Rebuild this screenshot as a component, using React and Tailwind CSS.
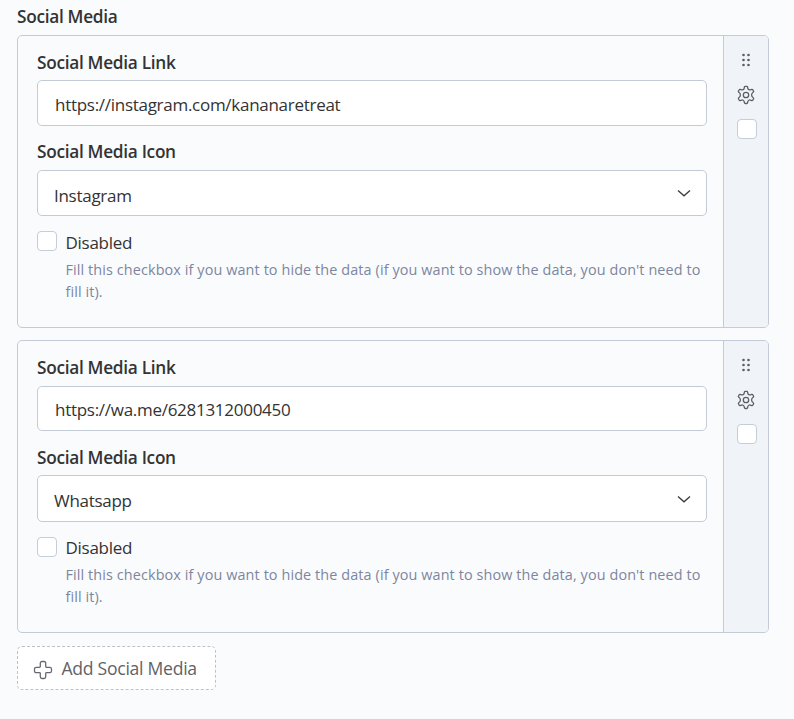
import React from "react";

const items = [
  {
    link: "https://instagram.com/kananaretreat",
    icon: "Instagram",
    inputSpacing: "mt-[5px] h-[46px] pt-[3px]",
    labelSpacing: "mt-[14px] mb-[6px]",
    selectHeight: "h-[46px]",
    selectPad: "pt-[5px]",
    disabledPad: "h-6",
  },
  {
    link: "https://wa.me/6281312000450",
    icon: "Whatsapp",
    inputSpacing: "mt-[6px] h-[45px] pt-[2px]",
    labelSpacing: "mt-[15px] mb-[5px]",
    selectHeight: "h-[47px]",
    selectPad: "pt-[4px]",
    disabledPad: "h-6 -mt-px",
  },
];

function DragIcon() {
  return (
    <svg className="block h-[14px] w-[10px]" viewBox="0 0 10 14" fill="#5b6067">
      {[2, 7].map((x) =>
        [2, 7, 12].map((y) => <circle key={`${x}-${y}`} cx={x + 0.5} cy={y} r="1.35" />)
      )}
    </svg>
  );
}

function GearIcon() {
  return (
    <svg className="block h-[20px] w-[20px]" viewBox="0 0 20 20" fill="none" stroke="#5b6067" strokeWidth="1.3" strokeLinejoin="round">
      <path d="M9.200 1.400h1.600q.6 0 .75.600l.35 1.500c.25 1 1.500 1.650 2.400 1.350l1.550-.5q.6-.2.9.35l.8 1.400q.3.500-.15.900l-1.150 1.100c-.8.800-.8 2.900 0 3.700l1.150 1.100q.45.400.15.900l-.8 1.400q-.3.550-.9.350l-1.550-.5c-.9-.3-2.150.35-2.400 1.350l-.35 1.500q-.15.600-.75.600H9.200q-.6 0-.75-.6l-.35-1.500c-.25-1-1.500-1.650-2.400-1.350l-1.550.5q-.6.200-.9-.35l-.8-1.400q-.3-.5.150-.9l1.150-1.100c.8-.8.800-2.900 0-3.700L2.600 7q-.45-.4-.15-.9l.8-1.400q.3-.55.9-.35l1.550.5c.9.300 2.150-.35 2.400-1.350L8.450 2q.15-.6.750-.6z" />
      <circle cx="10" cy="10" r="2.700" />
    </svg>
  );
}

function PlusIcon() {
  return (
    <svg className="block h-[20px] w-[20px] shrink-0" viewBox="0 0 20 20" fill="none" stroke="#666a6e" strokeWidth="1.3" strokeLinejoin="round">
      <path d="M9 1.500h2A1.700 1.700 0 0 1 12.700 3.200v3.300q0 .8.800.8h3.300A1.700 1.700 0 0 1 18.500 9v2a1.700 1.700 0 0 1-1.700 1.700h-3.300q-.8 0-.8.8v3.300A1.700 1.700 0 0 1 11 18.500H9A1.700 1.700 0 0 1 7.300 16.800v-3.300q0-.8-.8-.8H3.200A1.700 1.700 0 0 1 1.500 11V9A1.700 1.700 0 0 1 3.200 7.300h3.300q.8 0 .8-.8V3.200A1.700 1.700 0 0 1 9 1.500z" />
    </svg>
  );
}

function Checkbox() {
  return <span className="block h-5 w-5 shrink-0 rounded-[4px] border border-[#c5cdd8] bg-white" />;
}

function Label({ children }) {
  return (
    <div className="h-6 text-[17.25px] leading-6 font-semibold tracking-[-0.3px] whitespace-nowrap text-[#333]">{children}</div>
  );
}

function Card({ item }) {
  return (
    <section className="flex h-[293px] w-[752px] overflow-hidden rounded-[5px] border border-[#c2cbd6]">
      <div className="w-[705px] px-[19px] pt-[15px]">
        <Label>Social Media Link</Label>
        <div className={`flex w-[670px] items-center rounded-[5px] border border-[#c2cbd6] bg-white px-[17px] ${item.inputSpacing}`}>
          <span className="text-[17px] leading-6 tracking-[-0.28px]">{item.link}</span>
        </div>
        <div className={item.labelSpacing}>
          <Label>Social Media Icon</Label>
        </div>
        <div className={`flex w-[670px] items-center justify-between rounded-[5px] border border-[#c2cbd6] bg-white pr-[15px] pl-4 ${item.selectHeight}`}>
          <span className={`text-[17px] leading-6 tracking-[-0.28px] ${item.selectPad}`}>{item.icon}</span>
          <svg className="block h-[8px] w-[14px]" viewBox="0 0 14 8" fill="none" stroke="#3c3c40" strokeWidth="1.3">
            <path d="M1 1.500l6 5.300L13 1.500" />
          </svg>
        </div>
        <div className="mt-[15px] flex gap-[8.5px]">
          <Checkbox />
          <div>
            <div className={`text-[17px] leading-6 tracking-[-0.28px] ${item.disabledPad}`}>Disabled</div>
            <p className="mt-[4px] text-[14.4px] leading-[22px] tracking-[0.11px] whitespace-nowrap text-[#7d869f]">
              Fill this checkbox if you want to hide the data (if you want to show the data, you don't need to
              <br />
              fill it).
            </p>
          </div>
        </div>
      </div>
      <aside className="flex flex-1 flex-col items-center border-l border-[#c2cbd6] bg-[#f0f3f8] pt-[17px]">
        <DragIcon />
        <div className="mt-[18px]">
          <GearIcon />
        </div>
        <div className="mt-[14px] ml-[2px]">
          <Checkbox />
        </div>
      </aside>
    </section>
  );
}

export default function App() {
  return (
    <main className="flex h-[719px] w-[794px] flex-col bg-[#fafbfd] pt-[5px] pl-[17px] font-['Open_Sans','Noto_Sans',sans-serif] text-[#333]">
      <Label>Social Media</Label>
      <div className="mt-[6px] flex flex-col gap-3">
        {items.map((item) => (
          <Card key={item.icon} item={item} />
        ))}
      </div>
      <button className="mt-[13px] flex h-[44px] w-[199px] items-center gap-[8.5px] rounded-[5px] border border-dashed border-[#bfc1c5] bg-white pl-[15px] text-[17.6px] tracking-[-0.28px] whitespace-nowrap text-[#5f6368]">
        <span className="pt-[3px]">
          <PlusIcon />
        </span>
        Add Social Media
      </button>
    </main>
  );
}
